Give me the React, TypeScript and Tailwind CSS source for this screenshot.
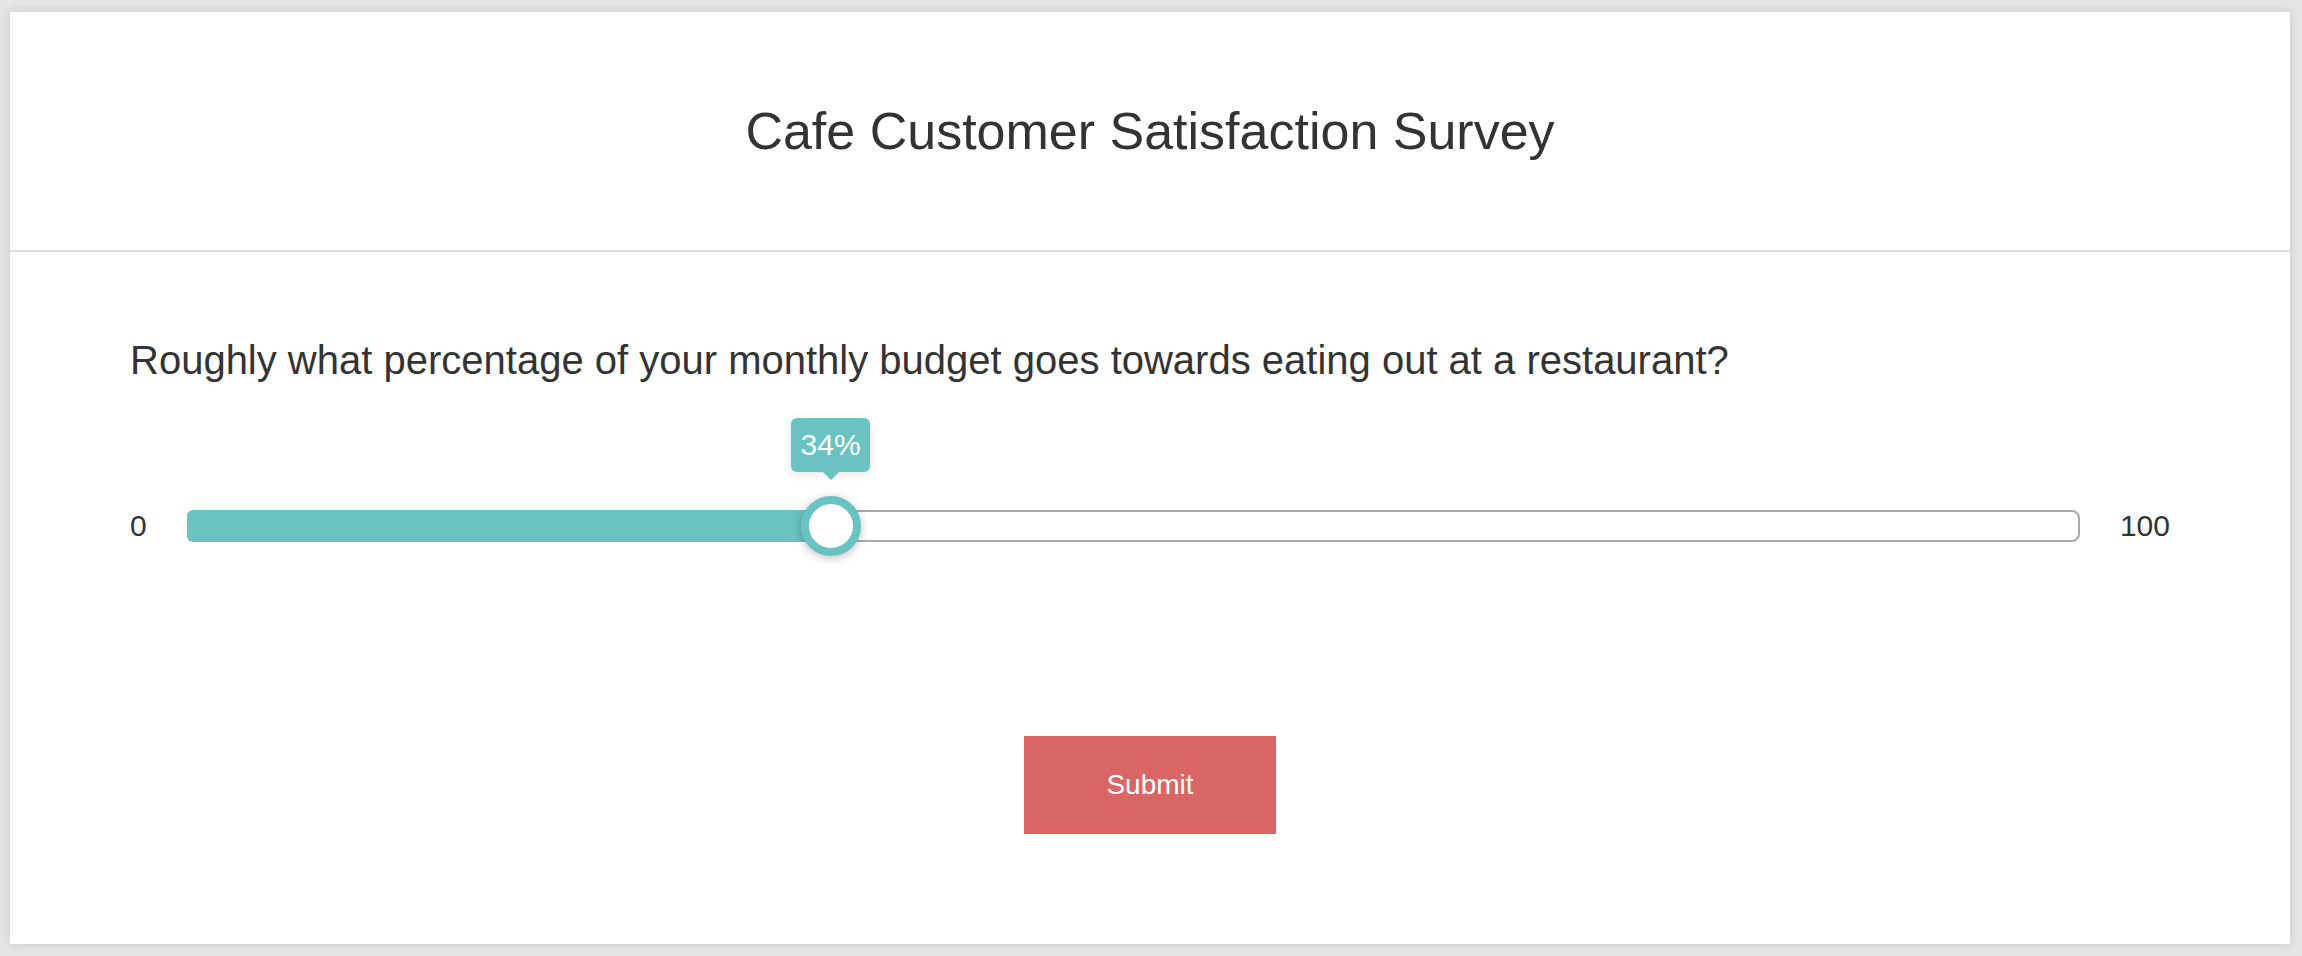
import { useState } from "react";

// ── Survey question slider ─────────────────────────────────────────

function PercentSlider({ value }: { value: number }) {
  return (
    <div className="flex h-[60px] items-center gap-[40px] text-[30px] leading-[34px] text-[#333333]">
      <span>0</span>
      <div className="relative h-[32px] flex-1 rounded-[8px] border-2 border-[#a9a9a9] bg-white">
        {/* filled part */}
        <div
          className="absolute -left-[2px] -top-[2px] h-[32px] rounded-l-[6px] bg-[#6bc2c2]"
          style={{ width: `calc(${value}% + 2px)` }}
        />
        {/* thumb + tooltip */}
        <div className="absolute top-1/2" style={{ left: `${value}%` }}>
          <div className="absolute -left-[30px] -top-[30px] h-[60px] w-[60px] rounded-full border-[8px] border-[#6bc2c2] bg-white shadow-[0_2px_10px_rgba(0,0,0,0.25)]" />
          <div className="absolute -left-[40px] -top-[108px] flex h-[54px] w-[79px] items-center justify-center rounded-[6px] bg-[#6bc2c2] text-[30px] text-white shadow-[0_2px_10px_rgba(0,0,0,0.12)]">
            {value}%
            <span className="absolute -bottom-[8px] left-1/2 -ml-[8px] h-0 w-0 border-x-[8px] border-t-[8px] border-x-transparent border-t-[#6bc2c2]" />
          </div>
        </div>
      </div>
      <span>100</span>
    </div>
  );
}

// ── Page ───────────────────────────────────────────────────────────

export default function App() {
  const [value] = useState(34);

  return (
    <div
      className="h-[956px] w-full bg-[#e5e5e5] pb-[12px] pl-[10px] pr-[12px] pt-[12px]"
      style={{ fontFamily: '"Liberation Sans", Arial, Helvetica, sans-serif' }}
    >
      <div className="flex h-full flex-col bg-white shadow-[0_0_10px_rgba(0,0,0,0.12)]">
        {/* Header */}
        <div className="flex h-[240px] items-center justify-center border-b-2 border-[#dedede]">
          <h1 className="text-[52px] leading-[60px] text-[#333333]">
            Cafe Customer Satisfaction Survey
          </h1>
        </div>

        {/* Question */}
        <div className="flex flex-1 flex-col px-[120px] pt-[85px]">
          <p className="text-[40px] leading-[46px] text-[#333333]">
            Roughly what percentage of your monthly budget goes towards eating out at a restaurant?
          </p>
          <div className="mt-[113px]">
            <PercentSlider value={value} />
          </div>
          <div className="mt-[180px] flex justify-center">
            <button className="h-[98px] w-[252px] bg-[#d96665] text-[28px] text-white">
              Submit
            </button>
          </div>
        </div>
      </div>
    </div>
  );
}
